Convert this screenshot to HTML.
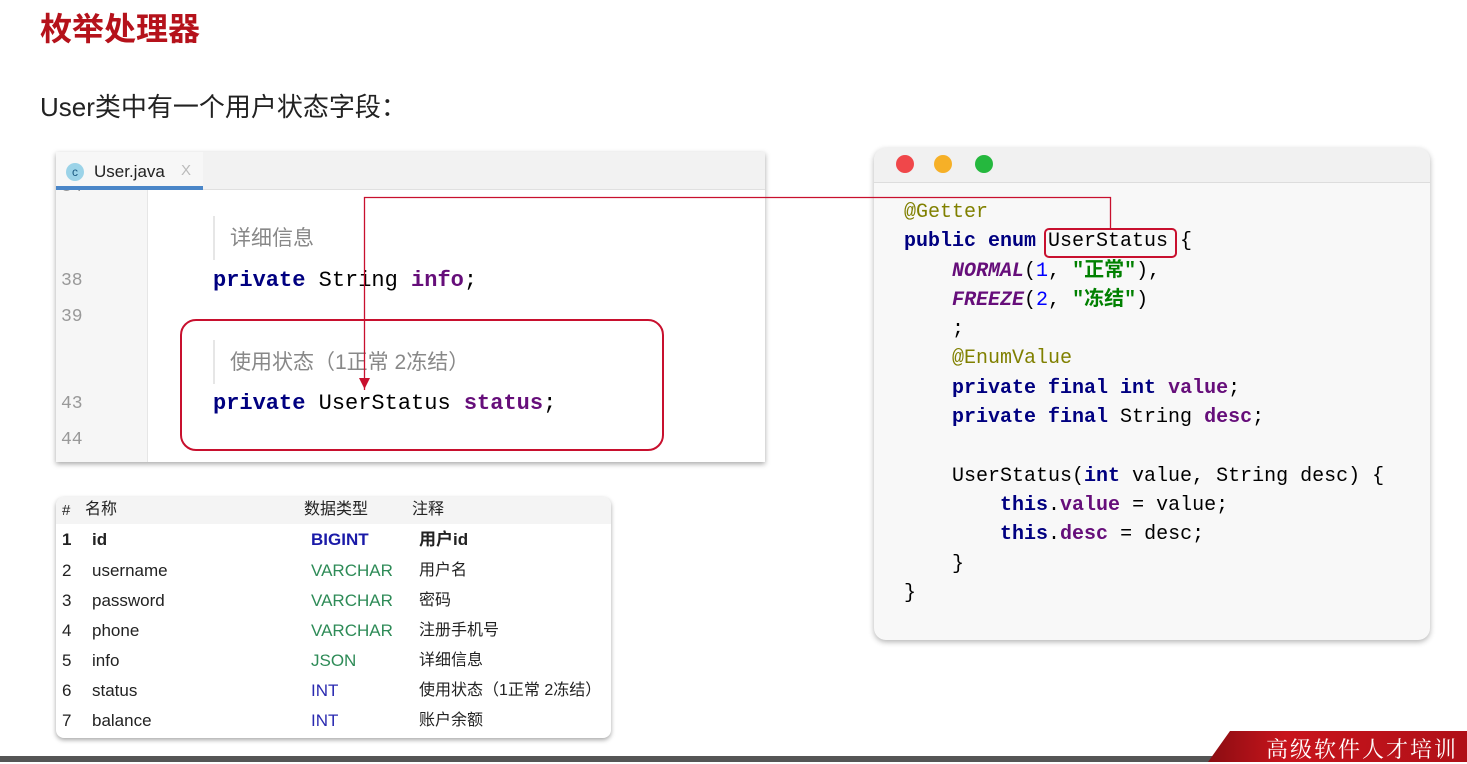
<!DOCTYPE html>
<html><head><meta charset="utf-8"><style>
*{margin:0;padding:0;box-sizing:border-box}
body{width:1467px;height:762px;background:#fff;position:relative;overflow:hidden;font-family:"Liberation Sans","Noto Sans CJK SC",sans-serif}
.a{position:absolute;white-space:pre}
.mono{font-family:"Liberation Mono","Noto Sans CJK SC",monospace}
.kw{color:#000080;font-weight:bold}
.fd{color:#660e7a;font-weight:bold}
.an{color:#808000}
.st{color:#008000;font-weight:bold}
.num{color:#0000ff}
.en{color:#660e7a;font-weight:bold;font-style:italic}
</style></head><body>
<div class="a" style="left:40px;top:4px;font-size:32px;font-weight:bold;color:#b5121b">枚举处理器</div>
<div class="a" style="left:40px;top:87px;font-size:26px;color:#222">User类中有一个用户状态字段：</div>

<!-- left editor -->
<div class="a" style="left:56px;top:152px;width:709px;height:310px;background:#fff;box-shadow:0 2px 5px rgba(0,0,0,.35)">
 <div class="a" style="left:0;top:0;width:709px;height:38px;background:#f2f2f2;border-bottom:1px solid #e0e0e0"></div>
 <div class="a" style="left:0;top:0;width:147px;height:38px;background:#f7f7f7"></div>
 <div class="a" style="left:0;top:34px;width:147px;height:4px;background:#4a86c8"></div>
 <div class="a" style="left:10px;top:11px;width:18px;height:18px;border-radius:50%;background:#9bd3e8;color:#1a5a80;font-size:12px;text-align:center;line-height:18px">c</div>
 <div class="a" style="left:38px;top:10px;font-size:17px;color:#222">User.java</div>
 <div class="a" style="left:125px;top:10px;font-size:15px;color:#bbb">X</div>
 <div class="a" style="left:0;top:38px;width:92px;height:272px;background:#f6f6f6;border-right:1px solid #e6e6e6"></div>
 <div class="a" style="left:0;top:38px;width:60px;height:8px;overflow:hidden"><div class="a mono" style="left:5px;top:-13px;font-size:18px;color:#999">34</div></div>
 <div class="a mono" style="left:5px;top:119px;font-size:18px;color:#999">38</div>
 <div class="a mono" style="left:5px;top:155px;font-size:18px;color:#999">39</div>
 <div class="a mono" style="left:5px;top:242px;font-size:18px;color:#999">43</div>
 <div class="a mono" style="left:5px;top:278px;font-size:18px;color:#999">44</div>
 <div class="a" style="left:157px;top:64px;width:2px;height:44px;background:#e6e6e6"></div>
 <div class="a" style="left:174px;top:70px;font-size:21px;color:#888">详细信息</div>
 <div class="a mono" style="left:157px;top:116px;font-size:22px;color:#000"><span class="kw">private</span> String <span class="fd">info</span>;</div>
 <div class="a" style="left:157px;top:188px;width:2px;height:44px;background:#e6e6e6"></div>
 <div class="a" style="left:174px;top:194px;font-size:21px;color:#888">使用状态（1正常 2冻结）</div>
 <div class="a mono" style="left:157px;top:239px;font-size:22px;color:#000"><span class="kw">private</span> UserStatus <span class="fd">status</span>;</div>
 <div class="a" style="left:124px;top:167px;width:484px;height:132px;border:2px solid #c8102e;border-radius:16px"></div>
</div>

<!-- right window -->
<div class="a" style="left:874px;top:148px;width:556px;height:492px;background:#f8f8f8;border-radius:12px;box-shadow:0 2px 6px rgba(0,0,0,.3)">
 <div class="a" style="left:0;top:0;width:556px;height:35px;background:#f1f1f1;border-bottom:1px solid #ddd;border-radius:12px 12px 0 0"></div>
 <div class="a" style="left:22px;top:7px;width:18px;height:18px;border-radius:50%;background:#f0474a"></div>
 <div class="a" style="left:60px;top:7px;width:18px;height:18px;border-radius:50%;background:#f6b027"></div>
 <div class="a" style="left:101px;top:7px;width:18px;height:18px;border-radius:50%;background:#25b83e"></div>
</div>
<div class="a mono" style="left:904px;top:198px;font-size:20px;line-height:29.3px;color:#000"><span class="an">@Getter</span>
<span class="kw">public enum</span> UserStatus {
    <span class="en">NORMAL</span>(<span class="num">1</span>, <span class="st">"正常"</span>),
    <span class="en">FREEZE</span>(<span class="num">2</span>, <span class="st">"冻结"</span>)
    ;
    <span class="an">@EnumValue</span>
    <span class="kw">private final int</span> <span class="fd">value</span>;
    <span class="kw">private final</span> String <span class="fd">desc</span>;

    UserStatus(<span class="kw">int</span> value, String desc) {
        <span class="kw">this</span>.<span class="fd">value</span> = value;
        <span class="kw">this</span>.<span class="fd">desc</span> = desc;
    }
}</div>
<div class="a" style="left:1044px;top:228px;width:133px;height:30px;border:2px solid #c8102e;border-radius:5px"></div>

<!-- connector -->
<svg class="a" style="left:0;top:0" width="1467" height="762">
 <path d="M364.5 390 V197.5 H1110.5 V228" stroke="#c8102e" stroke-width="1.3" fill="none"/>
 <path d="M359 378 L370 378 L364.5 389 Z" fill="#c8102e"/>
</svg>

<!-- table -->
<div class="a" style="left:56px;top:497px;width:555px;height:241px;background:#fff;border-radius:8px;box-shadow:0 2px 5px rgba(0,0,0,.35);overflow:hidden;font-size:17px;color:#222">
 <div class="a" style="left:0;top:0;width:555px;height:27px;background:#f4f4f4"></div>
 <div class="a" style="left:6px;top:3px;font-size:15px;line-height:22px">#</div>
 <div class="a" style="left:29px;top:2px;font-size:16px;line-height:22px">名称</div>
 <div class="a" style="left:248px;top:2px;font-size:16px;line-height:22px">数据类型</div>
 <div class="a" style="left:356px;top:2px;font-size:16px;line-height:22px">注释</div>
 <div class="a" style="left:6px;top:28px;line-height:30px;font-weight:bold">1</div>
 <div class="a" style="left:36px;top:28px;line-height:30px;font-weight:bold">id</div>
 <div class="a" style="left:255px;top:28px;line-height:30px;font-weight:bold;color:#1a1aa8">BIGINT</div>
 <div class="a" style="left:363px;top:28px;line-height:30px;font-weight:bold">用户id</div>
 <div class="a" style="left:6px;top:59px;line-height:30px">2
3
4
5
6
7</div>
 <div class="a" style="left:36px;top:59px;line-height:30px">username
password
phone
info
status
balance</div>
 <div class="a" style="left:255px;top:59px;line-height:30px;color:#2e8b57">VARCHAR
VARCHAR
VARCHAR
JSON
<span style="color:#2a2ab0">INT
INT</span></div>
 <div class="a" style="left:363px;top:59px;line-height:30px;font-size:16px">用户名
密码
注册手机号
详细信息
使用状态（1正常 2冻结）
账户余额</div>
</div>

<!-- footer -->
<div class="a" style="left:0;top:756px;width:1245px;height:6px;background:#555"></div>
<svg class="a" style="left:1200px;top:729px" width="267" height="33">
 <defs><linearGradient id="g" x1="0" x2="1"><stop offset="0" stop-color="#8a0d12"/><stop offset=".3" stop-color="#c8141c"/><stop offset="1" stop-color="#b01018"/></linearGradient></defs>
 <path d="M8 33 L30 2 L267 2 L267 33 Z" fill="url(#g)"/>
</svg>
<div class="a" style="left:1266px;top:733px;font-size:22px;color:#fff;font-family:'Noto Serif CJK SC',serif;letter-spacing:2px">高级软件人才培训</div>
</body></html>
